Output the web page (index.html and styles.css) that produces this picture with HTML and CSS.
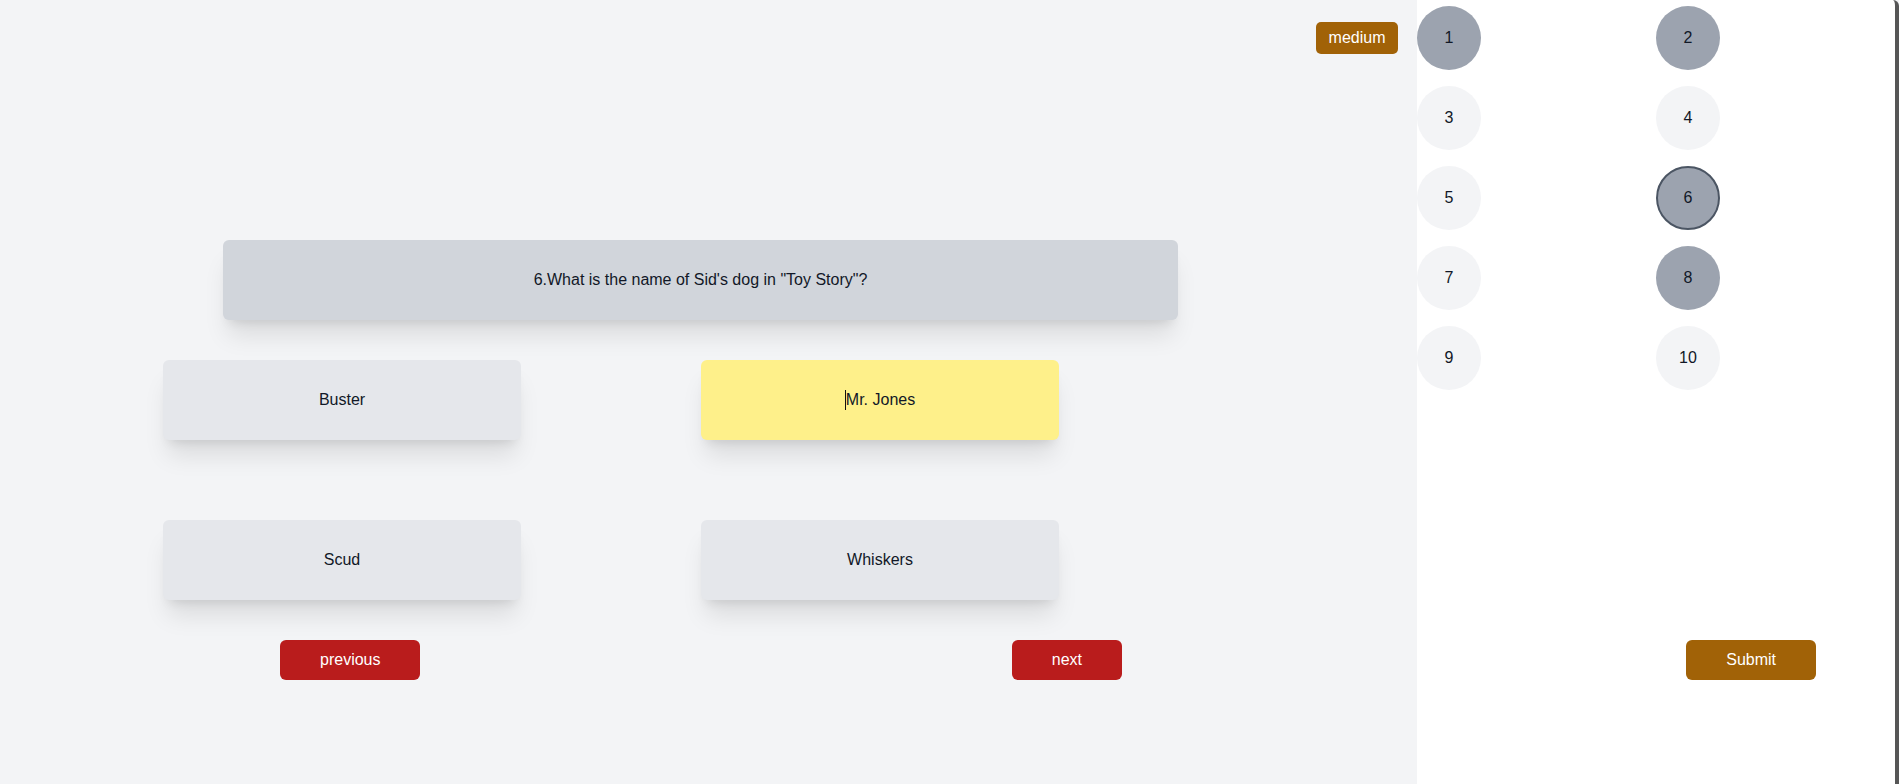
FILE: index.html
```html
<!DOCTYPE html>
<html lang="en">
<head>
<meta charset="utf-8">
<title>Quiz</title>
<link rel="stylesheet" href="styles.css">
</head>
<body>
<div class="app">
  <main class="main">
    <div class="topbar">
      <span class="badge">medium</span>
    </div>
    <div class="question">6.What is the name of Sid's dog in "Toy Story"?</div>
    <div class="answers">
      <div class="answer">Buster</div>
      <div class="answer selected"><span class="caret"></span>Mr. Jones</div>
      <div class="answer">Scud</div>
      <div class="answer">Whiskers</div>
    </div>
    <div class="nav">
      <button class="btn red">previous</button>
      <button class="btn red">next</button>
    </div>
  </main>
  <aside class="sidebar">
    <div class="grid">
      <div class="cell"><span class="dot done">1</span></div>
      <div class="cell"><span class="dot done">2</span></div>
      <div class="cell"><span class="dot">3</span></div>
      <div class="cell"><span class="dot">4</span></div>
      <div class="cell"><span class="dot">5</span></div>
      <div class="cell"><span class="dot done current">6</span></div>
      <div class="cell"><span class="dot">7</span></div>
      <div class="cell"><span class="dot done">8</span></div>
      <div class="cell"><span class="dot">9</span></div>
      <div class="cell"><span class="dot">10</span></div>
    </div>
    <div class="submit-row">
      <button class="btn amber">Submit</button>
    </div>
  </aside>
</div>
</body>
</html>
```
FILE: styles.css
```css
* { box-sizing: border-box; }
html, body { margin: 0; padding: 0; height: 100%; }
body {
  font-family: "Liberation Sans", Arial, sans-serif;
  font-size: 16px;
  color: #111827;
  background: #f3f4f6;
}
.app {
  display: flex;
  height: 784px;
}
.main {
  width: 1417px;
  flex: none;
  background: #f3f4f6;
  display: flex;
  flex-direction: column;
}
.topbar {
  display: flex;
  justify-content: flex-end;
  padding: 22px 19px 0 0;
}
.badge {
  display: flex;
  align-items: center;
  justify-content: center;
  width: 82px;
  height: 32px;
  background: #a16207;
  color: #fff;
  border-radius: 5px;
  font-size: 16px;
}
.question {
  margin: 186px 0 0 223px;
  width: 955px;
  height: 80px;
  background: #d1d5db;
  border-radius: 6px;
  display: flex;
  align-items: center;
  justify-content: center;
  box-shadow: 0 20px 25px -5px rgba(0,0,0,0.1), 0 8px 10px -6px rgba(0,0,0,0.1);
}
.answers {
  margin: 40px 0 0 163px;
  display: grid;
  grid-template-columns: 358px 358px;
  column-gap: 180px;
  row-gap: 80px;
}
.answer {
  height: 80px;
  background: #e5e7eb;
  border-radius: 6px;
  display: flex;
  align-items: center;
  justify-content: center;
  box-shadow: 0 20px 25px -5px rgba(0,0,0,0.1), 0 8px 10px -6px rgba(0,0,0,0.1);
}
.answer.selected { background: #fef08a; }
.caret {
  display: inline-block;
  width: 1px;
  height: 20px;
  background: #111;
}
.nav {
  margin: 40px 0 0 280px;
  width: 842px;
  display: flex;
  justify-content: space-between;
}
.btn {
  font-family: inherit;
  font-size: 16px;
  height: 40px;
  padding: 0 40px;
  border: none;
  border-radius: 6px;
  color: #fff;
  cursor: pointer;
}
.btn.red { background: #b91c1c; }
.btn.amber { background: #a16207; }
.sidebar {
  flex: 1;
  background: #fff;
  border-right: 4px solid #565656;
  border-top-right-radius: 6px;
  display: flex;
  flex-direction: column;
}
.grid {
  padding-top: 6px;
  display: grid;
  grid-template-columns: 1fr 1fr;
  row-gap: 16px;
}
.cell { display: flex; }
.dot {
  width: 64px;
  height: 64px;
  border-radius: 50%;
  background: #f3f4f6;
  display: flex;
  align-items: center;
  justify-content: center;
  color: #111827;
}
.dot.done { background: #9ca3af; }
.dot.current { border: 2px solid #4b5563; }
.submit-row {
  margin-top: 250px;
  display: flex;
  justify-content: flex-end;
  padding-right: 79px;
}
```
